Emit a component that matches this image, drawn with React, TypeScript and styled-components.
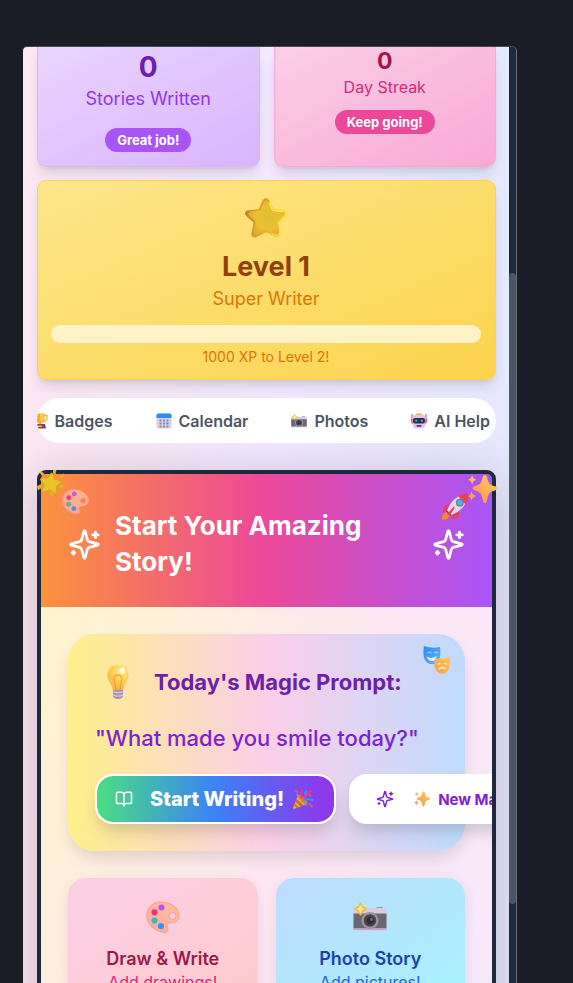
import React from 'react';
import styled, { createGlobalStyle } from 'styled-components';
import { BookOpen } from 'lucide-react';

const GlobalStyle = createGlobalStyle`
  *, *::before, *::after { box-sizing: border-box; }
  body {
    margin: 0;
    overflow: hidden;
    background: #1a1d26;
    font-family: Inter, 'Noto Sans', sans-serif;
  }
  h2, h3, p { margin: 0; }
  button { font-family: inherit; cursor: pointer; }
`;

/* ---------- Illustrations ---------- */

type ArtProps = { size: number };

const Art = styled.svg<{ $size: number }>`
  display: block;
  flex: none;
  width: ${(p) => p.$size}px;
  height: ${(p) => p.$size}px;
`;

const SparklesIcon = ({ size }: ArtProps) => (
  <Art
    $size={size}
    viewBox="0 0 24 24"
    fill="none"
    stroke="currentColor"
    strokeWidth="2"
    strokeLinecap="round"
    strokeLinejoin="round"
    aria-hidden="true"
  >
    <path d="M9.937 15.500A2 2 0 0 0 8.500 14.063l-6.135-1.582a.5.5 0 0 1 0-.962L8.500 9.936A2 2 0 0 0 9.937 8.500l1.582-6.135a.5.5 0 0 1 .963 0L14.063 8.500A2 2 0 0 0 15.500 9.937l6.135 1.581a.5.5 0 0 1 0 .964L15.500 14.063a2 2 0 0 0-1.437 1.437l-1.582 6.135a.5.5 0 0 1-.963 0z" />
    <path d="M20 3v4M22 5h-4M4 17v2M5 18H3" />
  </Art>
);

const starPath =
  'M16 1.5c1.3 0 2 1 2.6 2.2l2.7 6 6.7.6c3.4.4 4.2 2.6 1.8 4.7l-4.9 4.5 1.5 7c.6 3.2-1.3 4.8-3.9 3.2L16 26.3l-6.5 3.4c-2.6 1.4-4.6 0-4-3l1.5-7.2-4.9-4.4c-2.4-2.3-1.6-4.5 1.8-4.8l6.800-.6 2.700-6C14 2.500 14.700 1.500 16 1.500z';

const StarArt = ({ size }: ArtProps) => (
  <Art $size={size} viewBox="0 0 32 32" aria-hidden="true">
    <defs>
      <linearGradient id="starEdge" x1="0" y1="0.3" x2="1" y2="0.5">
        <stop offset="0" stopColor="#b8862b" />
        <stop offset="0.5" stopColor="#e0aa2c" />
        <stop offset="1" stopColor="#f8e63a" />
      </linearGradient>
      <radialGradient id="starFace" cx="0.55" cy="0.5" r="0.5">
        <stop offset="0" stopColor="#dfbd31" />
        <stop offset="0.7" stopColor="#edbf32" />
        <stop offset="1" stopColor="#e7ae31" />
      </radialGradient>
    </defs>
    <path d={starPath} fill="url(#starEdge)" />
    <path d={starPath} fill="url(#starFace)" transform="translate(2.600 2) scale(.86)" />
    <path d="M18.500 5l2.400 5.500 7 .8" fill="none" stroke="#fff03f" strokeWidth="1" strokeLinecap="round" />
  </Art>
);

const GlowStarArt = ({ size }: ArtProps) => (
  <Art $size={size} viewBox="0 0 32 32" aria-hidden="true">
    <g fill="#dfb51d">
      <path d="M19 0l4 0-1 5-3-1zM5 1l4 4-3 2-3-4zM0 19l5-2 1 4-5 3zM14 27l3-2 3 3-2 4zM27 17l5 1-2 5-4-3zM28 6l4-2v4l-4 2z" />
    </g>
    <path d={starPath} fill="#e0aa21" transform="rotate(8 16 16) translate(2.500 2) scale(.84)" />
    <path d={starPath} fill="#e9c52b" transform="rotate(8 16 16) translate(4.500 4) scale(.72)" />
  </Art>
);

const PaletteArt = ({ size }: ArtProps) => (
  <Art $size={size} viewBox="0 0 34 34" aria-hidden="true">
    <defs>
      <linearGradient id="paletteFace" x1="0" y1="1" x2="1" y2="0">
        <stop offset="0" stopColor="#ffaa9e" />
        <stop offset="0.7" stopColor="#ffb8a2" />
        <stop offset="1" stopColor="#f9b878" />
      </linearGradient>
    </defs>
    <path
      fillRule="evenodd"
      fill="url(#paletteFace)"
      stroke="#f7a194"
      strokeWidth="1"
      d="M15 2C6.500 2 .8 8 .8 15.300.8 24 7 30.500 17 32.300c4.500.8 5.800-1.500 4.600-4.600-1.300-3.300.2-4.900 3.600-4.900 5 0 8-3 8-7C33.200 8 25 2 15 2zM26.500 12.500a3.500 3.500 0 1 1 0 7 3.500 3.500 0 0 1 0-7z"
    />
    <circle cx="15.500" cy="7.500" r="3" fill="#b655ea" />
    <circle cx="8.500" cy="12.300" r="3.100" fill="#f12f85" />
    <circle cx="8.500" cy="20.500" r="3.100" fill="#3ab9ae" />
    <circle cx="15" cy="26" r="3.100" fill="#3892f6" />
  </Art>
);

const RocketArt = ({ size }: ArtProps) => (
  <Art $size={size} viewBox="0 0 32 32" aria-hidden="true">
    <path d="M6 22c-4 1-5 4-5 8.500 4.500.5 8-1 9-5z" fill="#f58b22" />
    <path d="M7 13c-3 1-5 4-4.500 9l7-2 3-6zM19 20l-6 3-1 6c5 2 8-2 9-6z" fill="#ed3b63" />
    <path d="M6 21l5 5 3-2-6-6z" fill="#5a4672" />
    <path d="M30 1C20 2 11 8 7 20l5 5C23 21 30 13 30 1z" fill="#e2d9e8" />
    <path d="M31 1c-4-.5-8 .5-11 3l8 9c3-4 3.500-8 3-12z" fill="#f03d50" />
    <circle cx="21.500" cy="11" r="4.500" fill="#677ea6" />
    <circle cx="21.500" cy="11" r="2.900" fill="#4fb2ff" />
    <path d="M7 24l8-9c1 3-1 5-6 11z" fill="#f23c68" />
  </Art>
);

const SparklesArt = ({ size }: ArtProps) => (
  <Art $size={size} viewBox="0 0 32 32" aria-hidden="true">
    <defs>
      <linearGradient id="sparkGlow" x1="1" y1="0" x2="0" y2="1">
        <stop offset="0" stopColor="#ffcf48" />
        <stop offset="0.55" stopColor="#ffae55" />
        <stop offset="1" stopColor="#ff7c4c" />
      </linearGradient>
    </defs>
    <g fill="url(#sparkGlow)">
      <path d="M19 1c1.400 0 2 1 2.400 2.500 1.600 6.600 2 7.800 8.600 9.600 1.200.4 2 1.100 2 2.200s-.8 1.800-2 2.200c-6.600 1.800-7 3-8.600 9.600C21 29.500 20.400 31 19 31s-2-1.500-2.400-3.900C15 20.500 14.600 19.300 8 17.500c-1.200-.4-2-1.100-2-2.200s.8-1.800 2-2.200c6.600-1.800 7-3 8.600-9.600C17 2 17.600 1 19 1z" />
      <path d="M5.500 1c.8 3 1.500 4 4.500 5-3 1-3.700 2-4.500 5C4.700 8 4 7 1 6c3-1 3.700-2 4.500-5zM5 18c.9 3.600 1.500 4.500 5 5.500-3.500 1-4.100 2-5 5.500-.9-3.500-1.500-4.500-5-5.500 3.500-1 4.100-1.900 5-5.500z" />
    </g>
  </Art>
);

const BulbArt = ({ size }: ArtProps) => (
  <Art $size={size} viewBox="0 0 36 36" aria-hidden="true">
    <defs>
      <radialGradient id="bulbGlass" cx="0.65" cy="0.25" r="0.75">
        <stop offset="0" stopColor="#fff6bb" />
        <stop offset="0.25" stopColor="#ffe16b" />
        <stop offset="0.8" stopColor="#ffc044" />
        <stop offset="1" stopColor="#f9ad48" />
      </radialGradient>
    </defs>
    <path d="M18 1C11.500 1 7.500 5.800 7.500 11.500c0 6 5 8.500 5.500 15h10c.5-6.500 5.500-9 5.500-15C28.500 5.800 24.500 1 18 1z" fill="url(#bulbGlass)" />
    <path d="M16 27l-1.300-9.500c-2-4 .5-6.500 3.300-6.500s5.300 2.500 3.300 6.500L20 27" fill="none" stroke="#f59b3d" strokeWidth="1.300" />
    <path d="M13 26h10v6c0 1.500-2.500 3-5 3s-5-1.500-5-3z" fill="#aa91b4" />
    <path d="M12.500 27.500c3 1.300 8 1.300 11 0M12.800 31c3 1.300 7.500 1.300 10.500 0" fill="none" stroke="#d8c7de" strokeWidth="1.300" />
    <ellipse cx="22.500" cy="6.500" rx="2.500" ry="3" fill="#fffbe2" />
  </Art>
);

const CameraArt = ({ size }: ArtProps) => (
  <Art $size={size} viewBox="0 0 34 34" aria-hidden="true">
    <rect x="23" y="7" width="7" height="3" rx="1" fill="#91a0a7" />
    <rect x=".5" y="8" width="33" height="23" rx="1.500" fill="#d8cde0" />
    <path d="M.5 13.500h33v15H.5z" fill="#6b6770" />
    <path d="M.5 28.500h33V30H.5z" fill="#bea7d1" />
    <circle cx="17" cy="20.500" r="8.500" fill="#9b959e" />
    <circle cx="17" cy="20.500" r="6.200" fill="#49414f" />
    <circle cx="17.500" cy="20.500" r="3.500" fill="#302a38" />
    <circle cx="18.500" cy="19.500" r="1.400" fill="#786b83" />
    <path d="M7.500 3l2 4 4 2-4 2-2 4-2-4-4-2 4-2z" fill="#ffe98c" stroke="#eac044" strokeWidth="1.600" strokeLinejoin="round" />
  </Art>
);

const TrophyArt = ({ size }: ArtProps) => (
  <Art $size={size} viewBox="0 0 32 32" aria-hidden="true">
    <path d="M8 5H2v5c0 5 4 7 9 6M24 5h6v5c0 5-4 7-9 6" fill="none" stroke="#f4b43c" strokeWidth="2.600" />
    <path d="M7 1h18v10c0 6-4 9-7 10v4h-4v-4c-3-1-7-4-7-10z" fill="#f5aa2d" />
    <path d="M16 1h7v10c0 4-3 7-5 8z" fill="#ffcf51" />
    <path d="M6 22h20l2 9H4z" fill="#82405c" />
    <rect x="12" y="25" width="8" height="3" fill="#f5bb48" />
  </Art>
);

const CalendarArt = ({ size }: ArtProps) => (
  <Art $size={size} viewBox="0 0 32 32" aria-hidden="true">
    <rect x="1" y="1" width="30" height="30" rx="4" fill="#ddcde9" />
    <path d="M5 1h22a4 4 0 0 1 4 4v5H1V5a4 4 0 0 1 4-4z" fill="#2491fa" />
    <g fill="#9286a0">
      {[13, 19, 25].map((y) =>
        [7, 14, 21].map((x) => (
          <rect key={`${x}-${y}`} x={x} y={y} width="4" height="4" rx="1" fill={x === 21 && y === 19 ? '#2491fa' : undefined} />
        )),
      )}
    </g>
  </Art>
);

const RobotArt = ({ size }: ArtProps) => (
  <Art $size={size} viewBox="0 0 32 32" aria-hidden="true">
    <path d="M2 2v18M30 2v18" stroke="#e9365d" strokeWidth="2" />
    <path d="M0 12h5v10H2zM27 12h5l-2 10h-3z" fill="#f04169" />
    <rect x="10" y="1" width="12" height="6" rx="2" fill="#f6ae30" />
    <path d="M8 4h16c4 0 5 4 5 9v8c0 6-3 10-8 10H11c-5 0-8-4-8-10v-8c0-5 1-9 5-9z" fill="#d8c8e9" />
    <rect x="4" y="10" width="24" height="11" rx="4" fill="#302d49" />
    <circle cx="10.500" cy="15.500" r="2.500" fill="#389bee" />
    <circle cx="21.500" cy="15.500" r="2.500" fill="#389bee" />
    <rect x="11" y="24" width="10" height="3.500" rx="1.500" fill="#493c5c" />
  </Art>
);

const MasksArt = ({ size }: ArtProps) => (
  <Art $size={size} viewBox="0 0 28 28" aria-hidden="true">
    <defs>
      <linearGradient id="maskBlue" x1="0" y1="0" x2="1" y2="1">
        <stop offset="0" stopColor="#2c86ff" />
        <stop offset="1" stopColor="#69b8f6" />
      </linearGradient>
      <linearGradient id="maskGold" x1="0" y1="1" x2="1" y2="0">
        <stop offset="0" stopColor="#ff9c4f" />
        <stop offset="1" stopColor="#ffc851" />
      </linearGradient>
    </defs>
    <path d="M1 0c5 2 11 2 16 1 1 7 .5 13-4 17-5 1-9 0-11-4S0 6 1 0z" fill="url(#maskBlue)" />
    <path d="M4.500 7c1.500-1 2.500-1 4 0M11 7c1-1 2.500-1 4 0" fill="none" stroke="#c8e5ff" strokeWidth="1" />
    <path d="M3.500 10.500c3 2 7 2 10-.5-.5 3-2 5-4.500 5s-4.500-2-5.500-4.500z" fill="#edf5ff" />
    <path d="M12 12c5 1.500 10 1 15-1 1 6 0 12-4 16-4 1.500-8 .5-10-3-2-4-2-8-1-12z" fill="url(#maskGold)" />
    <path d="M14.500 18.500l3-1M21 17.500l3 .5" stroke="#ffedc2" strokeWidth="1.200" />
    <path d="M15 24c1.500-4 6.500-4 8.500-1-2-.7-5.500-.7-8.500 1z" fill="#fff5e2" />
  </Art>
);

const PartyArt = ({ size }: ArtProps) => (
  <Art $size={size} viewBox="0 0 32 32" aria-hidden="true">
    <path d="M9 10l13 13-18 7c-2 .7-3-.5-2-2.500z" fill="#f5ad35" />
    <path d="M7 16l10 9-4 2-8-7zM4 23l6 5-3 1-4-4z" fill="#bd6c4c" />
    <ellipse cx="15.500" cy="16.500" rx="3.500" ry="9" transform="rotate(-45 15.500 16.500)" fill="#d98236" />
    <path d="M14 14c-2-5 1-7 0-12M18 16c1-7 6-8 10-12" fill="none" stroke="#ee319a" strokeWidth="3" strokeLinecap="round" />
    <path d="M17 19c3-4 8-3 13-2M21 5c-2 1-2 3-1 5" fill="none" stroke="#3197ef" strokeWidth="3" strokeLinecap="round" />
    <path d="M25 23l4 4M5 4l3 2" stroke="#e4459c" strokeWidth="3" strokeLinecap="round" />
    <circle cx="26" cy="11" r="2" fill="#ef4965" />
    <circle cx="8" cy="10" r="1.700" fill="#45bd84" />
    <circle cx="20" cy="24" r="1.700" fill="#3ba9e6" />
  </Art>
);

/* ---------- App window ---------- */

const Page = styled.div`
  height: 100vh;
  padding: 46px 56px 0 22px;
`;

const Window = styled.div`
  display: grid;
  grid-template-columns: minmax(0, 1fr) 7px;
  height: 100%;
  overflow: hidden;
  border: solid #6b7078;
  border-width: 1px 1px 0 1px;
  border-top-color: #444852;
  border-left-color: #151821;
  border-radius: 5px 5px 0 0;
  background: #1e293b;
`;

const Content = styled.main`
  display: flex;
  flex-direction: column;
  overflow: hidden;
  padding: 0 13px 0 14px;
  background: linear-gradient(to right, #fce7f3, #f3e8ff 50%, #e6e8ff);
`;

const ScrollTrack = styled.div`
  display: grid;
  grid-template-rows: 226fr 631fr 79fr;
`;

const ScrollThumb = styled.div`
  grid-row: 2;
  border-radius: 4px;
  background: #4b5563;
`;

/* ---------- Stats ---------- */

const Stats = styled.section`
  display: grid;
  flex: none;
  grid-template-columns: 1fr 1fr;
  gap: 14px;
`;

type Tone = 'purple' | 'pink';

const statTones = {
  purple: { from: '#e9d5ff', to: '#d8b4fe', value: '#6b21a8', label: '#9333ea', badge: '#a855f7' },
  pink: { from: '#fbcfe8', to: '#f9a8d4', value: '#9d174d', label: '#db2777', badge: '#ec4899' },
};

const cardShadow = '0 9px 14px -3px rgba(0, 0, 0, 0.12), 0 4px 6px -4px rgba(0, 0, 0, 0.1)';

const StatCard = styled.div<{ $tone: Tone }>`
  display: flex;
  flex-direction: column;
  align-items: center;
  height: 120px;
  padding-top: ${(p) => (p.$tone === 'purple' ? 2 : 0)}px;
  border: 1px solid ${(p) => statTones[p.$tone].to};
  border-top: 0;
  border-radius: 0 0 9px 9px;
  background: linear-gradient(to bottom right, ${(p) => statTones[p.$tone].from}, ${(p) => statTones[p.$tone].to});
  box-shadow: ${cardShadow};
`;

const StatValue = styled.div<{ $tone: Tone }>`
  color: ${(p) => statTones[p.$tone].value};
  font-size: ${(p) => (p.$tone === 'purple' ? 28 : 23)}px;
  font-weight: 700;
  line-height: ${(p) => (p.$tone === 'purple' ? 36 : 28)}px;
`;

const StatLabel = styled.div<{ $tone: Tone }>`
  color: ${(p) => statTones[p.$tone].label};
  font-size: ${(p) => (p.$tone === 'purple' ? 18 : 16)}px;
  line-height: ${(p) => (p.$tone === 'purple' ? 28 : 24)}px;
`;

const StatBadge = styled.span<{ $tone: Tone }>`
  margin-top: ${(p) => (p.$tone === 'purple' ? 15 : 11)}px;
  padding: 0 12px;
  border-radius: 12px;
  background: ${(p) => statTones[p.$tone].badge};
  color: #fff;
  font-size: 13px;
  font-weight: 700;
  line-height: 24px;
`;

const LevelCard = styled.section`
  display: flex;
  flex: none;
  flex-direction: column;
  align-items: center;
  margin-top: 13px;
  padding: 15px 14px 12px 13px;
  border: 1px solid #fcd34d;
  border-radius: 9px;
  background: linear-gradient(to bottom right, #fde68a, #fcd34d);
  box-shadow: ${cardShadow};
`;

const LevelTitle = styled.h2`
  margin-top: 9px;
  color: #92400e;
  font-size: 27px;
  font-weight: 700;
  line-height: 36px;
`;

const LevelRank = styled.p`
  color: #d97706;
  font-size: 18px;
  line-height: 28px;
`;

const LevelMeter = styled.div`
  width: 100%;
  height: 18px;
  margin: 12px 0 4px;
  border-radius: 9px;
  background: #fef3c7;
`;

const LevelHint = styled.p`
  color: #d97706;
  font-size: 14px;
  line-height: 20px;
`;

/* ---------- Tabs ---------- */

const Tabs = styled.nav`
  position: relative;
  z-index: 1;
  display: flex;
  flex: none;
  justify-content: flex-end;
  gap: 43px;
  height: 45px;
  margin-top: 18px;
  padding-right: 6px;
  overflow: hidden;
  border-radius: 23px;
  background: #fff;
`;

const Tab = styled.button`
  display: flex;
  flex: none;
  align-items: center;
  gap: 7px;
  padding: 0;
  border: 0;
  background: none;
  color: #4b5563;
  font-size: 16px;
  font-weight: 600;
`;

/* ---------- Story card ---------- */

const StoryWrap = styled.section`
  position: relative;
  flex: none;
  margin-top: 27px;
  border-radius: 9px;
  box-shadow: 0 8px 50px rgba(0, 0, 0, 0.2);
`;

const StoryCard = styled.div`
  overflow: hidden;
  border: 4px solid #1e293b;
  border-radius: 9px;
  background: #1e293b;
`;

const StoryHeader = styled.header`
  display: flex;
  align-items: center;
  gap: 14px;
  padding: 34px 27px 27px;
  background: linear-gradient(to right, #fb923c, #ec4899 50%, #a855f7);
  color: #fff;
`;

const StoryTitle = styled.h2`
  flex: 1;
  font-size: 26px;
  font-weight: 700;
  line-height: 36px;
`;

const Sticker = styled.span<{ $top: number; $left?: number; $right?: number }>`
  position: absolute;
  top: ${(p) => p.$top}px;
  ${(p) => (p.$left !== undefined ? `left: ${p.$left}px;` : '')}
  ${(p) => (p.$right !== undefined ? `right: ${p.$right}px;` : '')}
`;

const FadedSticker = styled(Sticker)`
  opacity: 0.85;
`;

const StoryBody = styled.div`
  display: flex;
  flex-direction: column;
  gap: 27px;
  padding: 27px;
  background: linear-gradient(115deg, #fef5cb, #fce7f3 55%, #f5e8fc);
`;

const PromptCard = styled.div`
  position: relative;
  padding: 27px;
  border-radius: 27px;
  background: linear-gradient(to right, #fef08a, #fbcfe8 50%, #bfdbfe);
  box-shadow: 0 9px 18px -4px rgba(0, 0, 0, 0.14);
`;

const PromptHeading = styled.h3`
  display: flex;
  align-items: center;
  gap: 14px;
  height: 42px;
  color: #6b21a8;
  font-size: 22px;
  font-weight: 700;
  white-space: nowrap;
`;

const BulbSlot = styled.span`
  display: flex;
  justify-content: center;
  width: 45px;
`;

const PromptText = styled.p`
  margin: 17px 0 18px;
  color: #7e22ce;
  font-size: 22px;
  font-weight: 500;
  line-height: 36px;
  white-space: nowrap;
`;

const Actions = styled.div`
  display: flex;
  gap: 13px;
`;

const ActionButton = styled.button<{ $primary?: boolean }>`
  display: flex;
  flex: none;
  align-items: center;
  height: 50px;
  padding: 0 ${(p) => (p.$primary ? 20 : 25)}px 0 ${(p) => (p.$primary ? 18 : 25)}px;
  border: 2px solid #fff;
  border-radius: 18px;
  background: ${(p) =>
    p.$primary ? 'linear-gradient(to right, #4ade80, #3b82f6 50%, #9333ea) padding-box, #fff' : '#fff'};
  box-shadow: 0 10px 16px -3px rgba(0, 0, 0, 0.16);
  color: ${(p) => (p.$primary ? '#fff' : '#7e22ce')};
  font-size: ${(p) => (p.$primary ? 20 : 15)}px;
  font-weight: ${(p) => (p.$primary ? 800 : 700)};
  white-space: nowrap;
`;

const ActionLabel = styled.span<{ $gap: number }>`
  display: flex;
  align-items: center;
  gap: 8px;
  margin-left: ${(p) => p.$gap}px;
`;

const ModeGrid = styled.div`
  display: grid;
  grid-template-columns: 1fr 1fr;
  gap: 18px;
`;

const ModeCard = styled.button<{ $from: string; $to: string }>`
  display: flex;
  flex-direction: column;
  align-items: center;
  padding: 22px 18px;
  border: 0;
  border-radius: 18px;
  background: linear-gradient(to bottom right, ${(p) => p.$from}, ${(p) => p.$to});
  box-shadow: 0 4px 14px rgba(0, 0, 0, 0.08);
`;

const ModeTitle = styled.span<{ $color: string }>`
  margin-top: 11px;
  color: ${(p) => p.$color};
  font-size: 18px;
  font-weight: 600;
  line-height: 28px;
`;

const ModeHint = styled.span<{ $color: string }>`
  color: ${(p) => p.$color};
  font-size: 16px;
  line-height: 18px;
`;

const stats: { tone: Tone; label: string; badge: string }[] = [
  { tone: 'purple', label: 'Stories Written', badge: 'Great job!' },
  { tone: 'pink', label: 'Day Streak', badge: 'Keep going!' },
];

const tabs = [
  { label: 'Badges', Icon: TrophyArt },
  { label: 'Calendar', Icon: CalendarArt },
  { label: 'Photos', Icon: CameraArt },
  { label: 'AI Help', Icon: RobotArt },
];

export default function App() {
  return (
    <Page>
      <GlobalStyle />
      <Window>
        <Content>
          <Stats>
            {stats.map(({ tone, label, badge }) => (
              <StatCard key={label} $tone={tone}>
                <StatValue $tone={tone}>0</StatValue>
                <StatLabel $tone={tone}>{label}</StatLabel>
                <StatBadge $tone={tone}>{badge}</StatBadge>
              </StatCard>
            ))}
          </Stats>

          <LevelCard>
            <StarArt size={44} />
            <LevelTitle>Level 1</LevelTitle>
            <LevelRank>Super Writer</LevelRank>
            <LevelMeter role="progressbar" aria-label="XP" aria-valuemin={0} aria-valuemax={1000} aria-valuenow={0} />
            <LevelHint>1000 XP to Level 2!</LevelHint>
          </LevelCard>

          <Tabs>
            {tabs.map(({ label, Icon }) => (
              <Tab key={label} type="button">
                <Icon size={16} />
                {label}
              </Tab>
            ))}
          </Tabs>

          <StoryWrap>
            <StoryCard>
              <StoryHeader>
                <SparklesIcon size={33} />
                <StoryTitle>Start Your Amazing Story!</StoryTitle>
                <SparklesIcon size={33} />
              </StoryHeader>
              <StoryBody>
                <PromptCard>
                  <Sticker $top={12} $right={14}>
                    <MasksArt size={28} />
                  </Sticker>
                  <PromptHeading>
                    <BulbSlot>
                      <BulbArt size={36} />
                    </BulbSlot>
                    Today's Magic Prompt:
                  </PromptHeading>
                  <PromptText>"What made you smile today?"</PromptText>
                  <Actions>
                    <ActionButton type="button" $primary>
                      <BookOpen size={18} />
                      <ActionLabel $gap={17}>
                        Start Writing! <PartyArt size={22} />
                      </ActionLabel>
                    </ActionButton>
                    <ActionButton type="button">
                      <SparklesIcon size={18} />
                      <ActionLabel $gap={20}>
                        <SparklesArt size={16} /> New Magic Prompt
                      </ActionLabel>
                    </ActionButton>
                  </Actions>
                </PromptCard>
                <ModeGrid>
                  <ModeCard type="button" $from="#fbcfe8" $to="#fecaca">
                    <PaletteArt size={34} />
                    <ModeTitle $color="#9d174d">Draw &amp; Write</ModeTitle>
                    <ModeHint $color="#db2777">Add drawings!</ModeHint>
                  </ModeCard>
                  <ModeCard type="button" $from="#bfdbfe" $to="#a5f3fc">
                    <CameraArt size={34} />
                    <ModeTitle $color="#1e40af">Photo Story</ModeTitle>
                    <ModeHint $color="#2563eb">Add pictures!</ModeHint>
                  </ModeCard>
                </ModeGrid>
              </StoryBody>
            </StoryCard>
            <Sticker $top={0} $left={0}>
              <GlowStarArt size={27} />
            </Sticker>
            <FadedSticker $top={18} $left={25}>
              <PaletteArt size={27} />
            </FadedSticker>
            <Sticker $top={23} $right={27}>
              <RocketArt size={28} />
            </Sticker>
            <Sticker $top={4} $right={-1}>
              <SparklesArt size={30} />
            </Sticker>
          </StoryWrap>
        </Content>
        <ScrollTrack>
          <ScrollThumb />
        </ScrollTrack>
      </Window>
    </Page>
  );
}
